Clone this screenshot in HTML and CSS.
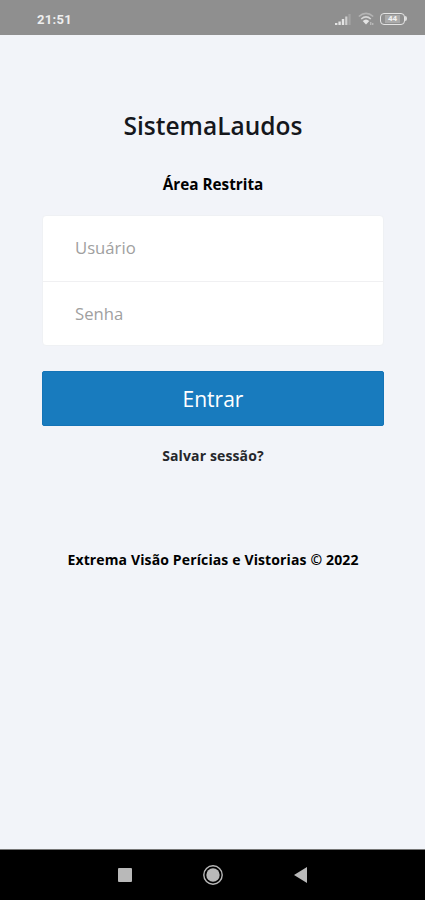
FILE: index.html
```
<!DOCTYPE html>
<html lang="pt-br">
<head>
    <meta charset="UTF-8">
    <meta name="viewport" content="width=device-width, initial-scale=1.0">
    <title>SistemaLaudos</title>
    <link rel="stylesheet" href="styles.css">
</head>
<body>
    <header class="status-bar">
        <span class="clock">21:51</span>
        <div class="status-icons">
            <svg class="signal" width="18" height="14" viewBox="0 0 18 14">
                <path d="M0 13h2.4v-2H0zM3.4 13h2.4V9.5H3.4zM6.8 13h2.4V7H6.8z" fill="#e4e4e4"/>
                <path d="M10.2 13h2.2V4.5h-2.2z" fill="#d0d0d0"/>
                <path d="M13.4 13h2.2V2h-2.2z" fill="#a3a3a3"/>
            </svg>
            <svg class="wifi" width="16" height="14" viewBox="0 0 16 14" fill="none" stroke-width="1.5">
                <path d="M.8 4.5Q8-1.8 15.2 4.5" stroke="#b4b4b4"/>
                <path d="M3.2 7Q8 2.8 12.8 7" stroke="#d6d6d6"/>
                <path d="M4.7 9Q8 6 11.3 9L8 12.5z" fill="#e4e4e4"/>
                <path d="M12.8 10v3M14.8 11v2" stroke="#c8c8c8" stroke-width="1"/>
            </svg>
            <div class="battery"><span>44</span></div>
        </div>
    </header>

    <main class="login">
        <h1>SistemaLaudos</h1>
        <h2>Área Restrita</h2>
        <form>
            <div class="fields">
                <input type="text" placeholder="Usuário">
                <input type="password" placeholder="Senha">
            </div>
            <button type="button" class="btn-entrar">Entrar</button>
        </form>
        <p class="session">Salvar sessão?</p>
        <p class="copyright">Extrema Visão Perícias e Vistorias © 2022</p>
    </main>

    <nav class="nav-bar">
        <svg width="14" height="14" viewBox="0 0 14 14"><rect width="14" height="14" rx="1" fill="#b9b9b9"/></svg>
        <svg width="20" height="20" viewBox="0 0 20 20">
            <circle cx="10" cy="10" r="9.2" fill="none" stroke="#b9b9b9" stroke-width="1.4"/>
            <circle cx="10" cy="10" r="6.7" fill="#b9b9b9"/>
        </svg>
        <svg width="13" height="16" viewBox="0 0 13 16"><path d="M13 0v16L0 8z" fill="#b9b9b9"/></svg>
    </nav>
</body>
</html>
```

FILE: styles.css
```
* {
    margin: 0;
    padding: 0;
    box-sizing: border-box;
}

body {
    font-family: "Open Sans", "Noto Sans", sans-serif;
    background: #f2f4f9;
    color: #15171c;
    height: 100vh;
    display: flex;
    flex-direction: column;
    overflow: hidden;
}

/* Barra de status */
.status-bar {
    height: 35px;
    padding: 3px 17px 0 37px;
    background: #8f8f8f;
    display: flex;
    align-items: center;
    justify-content: space-between;
    flex-shrink: 0;
}

.clock {
    font-family: Roboto, sans-serif;
    font-size: 13px;
    font-weight: 700;
    letter-spacing: 0.3px;
    color: #eee;
}

.status-icons {
    display: flex;
    align-items: center;
}

.wifi {
    margin: 0 6px 0 5px;
}

.battery {
    width: 25px;
    height: 12px;
    margin-right: 3px;
    border: 1.5px solid #e4e4e4;
    border-radius: 4px;
    position: relative;
    display: flex;
    align-items: center;
    justify-content: center;
    font: 700 8px/8px Roboto, sans-serif;
    color: #f0f0f0;
}

.battery span {
    padding: 0 3px;
    background: #aaa;
}

.battery::after {
    content: "";
    position: absolute;
    right: -3px;
    top: 2px;
    width: 2px;
    height: 5px;
    border-radius: 0 2px 2px 0;
    background: #dcdcdc;
}

/* Login */
.login {
    flex: 1;
    padding: 72px 41px 0 42px;
    text-align: center;
}

h1 {
    font-size: 24.5px;
    font-weight: 600;
    line-height: 37px;
}

h2 {
    margin-top: 28px;
    font-size: 15.3px;
    font-weight: 700;
    line-height: 24px;
    color: #000;
}

.fields {
    margin-top: 19px;
    border: 1px solid #eff1f4;
    border-radius: 4px;
    background: #fff;
    overflow: hidden;
}

input {
    display: block;
    width: 100%;
    height: 65px;
    padding: 0 32px 2px;
    border: 0;
    background: transparent;
    font: 16.7px "Open Sans", sans-serif;
}

input + input {
    height: 64px;
    padding-bottom: 1px;
    border-top: 1px solid #f0f0f2;
}

input::placeholder {
    color: #a0a0a0;
}

.btn-entrar {
    display: block;
    width: 100%;
    height: 55px;
    margin-top: 25px;
    border: 1px solid #1474b7;
    border-radius: 2px;
    background: #187bbe;
    color: #fff;
    font: 21px "Open Sans", sans-serif;
}

.session {
    margin-top: 19px;
    font-size: 14px;
    font-weight: 700;
    line-height: 22px;
    letter-spacing: 0.13px;
    color: #25272b;
}

.copyright {
    margin-top: 82px;
    font-size: 14px;
    font-weight: 700;
    line-height: 22px;
    letter-spacing: 0.13px;
    color: #000;
    white-space: nowrap;
}

/* Botões do Android */
.nav-bar {
    height: 51px;
    padding: 0 118px;
    border-top: 1px solid #777;
    background: #000;
    display: flex;
    align-items: center;
    justify-content: space-between;
    flex-shrink: 0;
}
```
